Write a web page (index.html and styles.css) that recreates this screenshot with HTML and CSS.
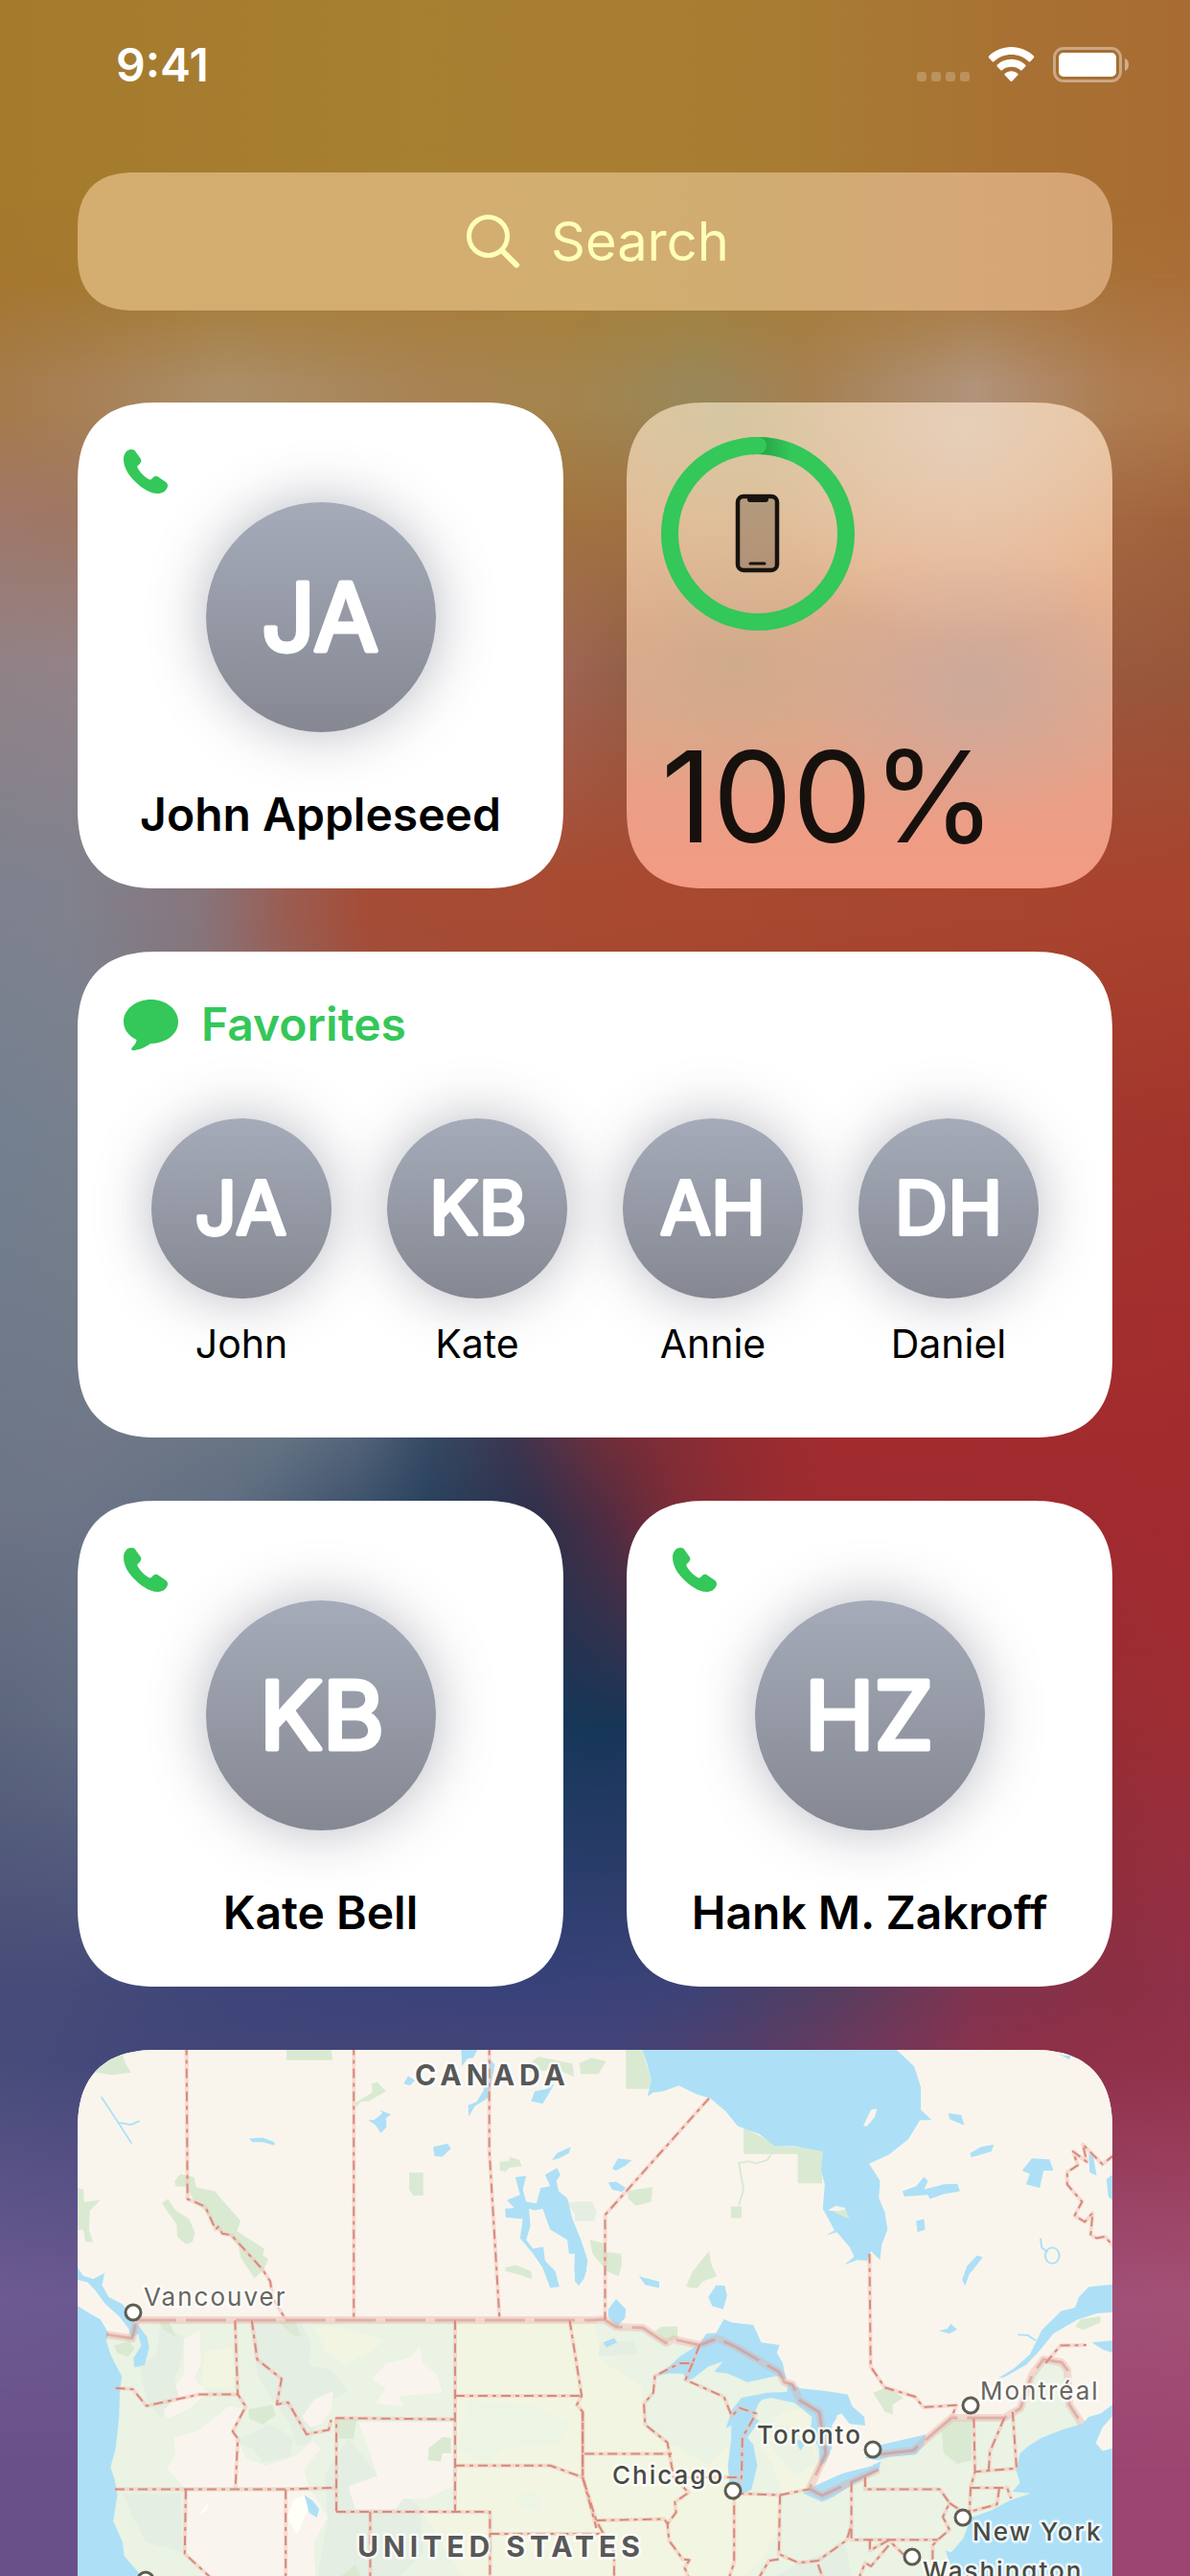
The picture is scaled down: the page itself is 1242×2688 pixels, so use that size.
FILE: index.html
```html
<!DOCTYPE html>
<html lang="en">
<head>
<meta charset="utf-8">
<meta name="viewport" content="width=device-width, initial-scale=1">
<title>Today View</title>
<link rel="stylesheet" href="styles.css">
</head>
<body>
<div class="wallpaper" aria-hidden="true">
  <i class="band b0"></i><i class="band b1"></i><i class="band b2"></i><i class="band b3"></i><i class="band b4"></i><i class="band b5"></i><i class="band b6"></i><i class="band b7"></i><i class="band b8"></i><i class="band b9"></i><i class="band b10"></i><i class="band b11"></i><i class="band b12"></i><i class="band b13"></i>
</div>

<svg class="sprite" aria-hidden="true">
  <symbol id="phone" viewBox="0 0 46 46">
    <path d="M8 0C11 0 12 1 13 3L18 10C19 12 18 14 16 16C14 17.500 14 18 15 20C18 25 22 28.500 26 31C28 32 28.500 31.500 30 30C32 28 34 27 36 28.500L44 34C46 35.500 46.500 37.500 45.500 40C43.500 44.500 39.500 46 35 46C27 46 17 39 10 31.500C4 25 0 18 0 10C0 5 3 0 8 0Z"/>
  </symbol>
  <symbol id="bubble" viewBox="0 0 57 53">
    <path d="M28.500 0C44 0 57 10 57 23C57 36 45 45.500 28 46C21 51 14 53 10 53C8 53 7.500 51.500 9 50C12 47 13.500 44 13.500 42C5 38 0 31 0 23C0 10 13 0 28.500 0Z"/>
  </symbol>
</svg>

<div class="screen">
  <header class="status">
    <time class="clock">9:41</time>
    <svg class="status-icons" viewBox="0 0 222 40" aria-label="Wi-Fi on, battery full">
      <g fill="#fff" fill-opacity=".22"><rect y="27" width="10" height="10" rx="3"/><rect x="15" y="27" width="10" height="10" rx="3"/><rect x="30" y="27" width="10" height="10" rx="3"/><rect x="45" y="27" width="10" height="10" rx="3"/></g>
      <g fill="#fff">
        <path d="M98.500 1C107.500 1 115.500 4.500 121.500 10C122.500 11 122.500 11.500 122 12.300L118.500 16C117.800 16.700 117.200 16.700 116.500 16C111.500 11.500 105.500 9 98.500 9S85.500 11.500 80.500 16C79.800 16.700 79.200 16.700 78.500 16L75 12.300C74.500 11.500 74.500 11 75.500 10C81.500 4.500 89.500 1 98.500 1Z"/>
        <path d="M98.500 13.800C104.200 13.800 109.200 16 113 19.500C113.800 20.200 113.800 20.800 113.200 21.500L109.800 25C109 25.800 108.500 25.700 107.800 25C105.200 22.800 102 21.700 98.500 21.700S91.800 22.800 89.200 25C88.500 25.700 88 25.800 87.200 25L83.800 21.500C83.200 20.800 83.200 20.200 84 19.500C87.800 16 92.800 13.800 98.500 13.800Z"/>
        <path d="M98.500 26.300C101.300 26.300 103.500 27.300 105.200 28.700C105.800 29.300 105.800 29.800 105.200 30.400L99.500 36.500C98.800 37.200 98.200 37.200 97.500 36.500L91.800 30.400C91.200 29.800 91.200 29.300 91.800 28.700C93.500 27.300 95.700 26.300 98.500 26.300Z"/>
        <rect x="148" y="7" width="60" height="25" rx="5"/>
      </g>
      <rect x="143.500" y="2.500" width="69" height="34" rx="9.500" fill="none" stroke="#fff" stroke-opacity=".4" stroke-width="3"/>
      <path d="M217 13C220 14 221 17 221 19.500S220 25 217 26Z" fill="#fff" fill-opacity=".45"/>
    </svg>
  </header>

  <label class="search">
    <svg class="search-icon" viewBox="0 0 56 56" aria-hidden="true"><circle cx="22.500" cy="22.500" r="20" fill="none" stroke="currentColor" stroke-width="5"/><path d="M37.500 38L52 52.500" stroke="currentColor" stroke-width="6" stroke-linecap="round"/></svg>
    <input class="search-input" type="search" placeholder="Search" aria-label="Search">
  </label>

  <main class="widgets">
    <a class="card contact" href="#john-appleseed">
      <svg class="phone" aria-hidden="true"><use href="#phone"/></svg>
      <svg class="avatar" viewBox="0 0 240 240"><text class="initials" x="119" y="155">JA</text></svg>
      <span class="name">John Appleseed</span>
    </a>

    <section class="card battery" aria-label="Battery">
      <svg class="ring" viewBox="0 0 202 202" aria-hidden="true">
        <defs><linearGradient id="cap"><stop offset="0" stop-color="#25a244"/><stop offset="1" stop-color="#34c759"/></linearGradient></defs>
        <circle cx="101" cy="101" r="92" fill="none" stroke="#34c759" stroke-width="18"/>
        <path d="M101 9A92 92 0 0 1 136 16" fill="none" stroke="url(#cap)" stroke-width="18"/>
        <path d="M94 9.300L101 9" fill="none" stroke="#34c759" stroke-width="18" stroke-linecap="round"/>
        <rect x="80" y="62" width="41" height="77" rx="6" fill="#1c130e" fill-opacity=".22" stroke="#17130e" stroke-width="4.500"/>
        <path d="M90 61H112V65C112 67 111 68 109 68H93C91 68 90 67 90 65Z" fill="#17130e"/>
        <path d="M93 132H108" stroke="#17130e" stroke-width="3" stroke-linecap="round"/>
      </svg>
      <span class="percent">100%</span>
    </section>

    <section class="card favorites">
      <h2 class="favorites-title"><svg class="bubble" aria-hidden="true"><use href="#bubble"/></svg>Favorites</h2>
      <ul class="people">
        <li><a class="person" href="#john"><svg class="avatar" viewBox="0 0 240 240"><text class="initials" x="119" y="155">JA</text></svg>John</a></li>
        <li><a class="person" href="#kate"><svg class="avatar" viewBox="0 0 240 240"><text class="initials" x="121" y="155">KB</text></svg>Kate</a></li>
        <li><a class="person" href="#annie"><svg class="avatar" viewBox="0 0 240 240"><text class="initials" x="120" y="155">AH</text></svg>Annie</a></li>
        <li><a class="person" href="#daniel"><svg class="avatar" viewBox="0 0 240 240"><text class="initials" x="120" y="155">DH</text></svg>Daniel</a></li>
      </ul>
    </section>

    <a class="card contact" href="#kate-bell">
      <svg class="phone" aria-hidden="true"><use href="#phone"/></svg>
      <svg class="avatar" viewBox="0 0 240 240"><text class="initials" x="121" y="155">KB</text></svg>
      <span class="name">Kate Bell</span>
    </a>
    <a class="card contact" href="#hank-zakroff">
      <svg class="phone" aria-hidden="true"><use href="#phone"/></svg>
      <svg class="avatar" viewBox="0 0 240 240"><text class="initials" x="119" y="155">HZ</text></svg>
      <span class="name">Hank M. Zakroff</span>
    </a>
  </main>

  <section class="map" aria-label="Map of North America">
    <svg class="map-art" viewBox="0 0 1080 549" preserveAspectRatio="xMidYMin slice">
      <defs>
        <g id="states-west" class="states" transform="translate(-21 -19) scale(.3571 .3622)">
          <path d="M377 40L380 482 432 504 462 570 470 562 482 582 508 586 600 686 622 720 628 765 666 828"/>
          <path d="M866 40V828M1262 40V340L1292 828"/>
          <path d="M519 832L527 1045 550 1080 512 1152 527 1172 520 1316"/>
          <path d="M568 832L584 945 655 1000 641 1074 674 1068 728 1160 793 1147 800 1118"/>
          <path d="M170 1027L220 1030 260 1078 415 1045H527"/>
          <path d="M168 1318H667L815 1314"/>
          <path d="M815 1382V1113L1162 1117M815 1383H1264V1600M1162 832V1383"/>
          <path d="M1162 1049H1532M1162 1250H1440L1535 1284M1264 1447H1600"/>
          <path d="M1497 832L1532 1049 1518 1075 1535 1095V1284L1575 1430"/>
          <path d="M375 1320L372 1504 450 1575M667 1320V1600M914 1384V1600"/>
        </g>
        <g id="states-east" class="states" transform="translate(519 -19) scale(.4094 .3622)">
          <path d="M342 192L77 528V830"/>
          <path d="M751 640L754 965 790 1025 868 1052 888 1082 973 1076 960 1112"/>
          <path d="M20 1095V1284L55 1410 100 1500V1600"/>
          <path d="M25 1216H247M55 1408L228 1404 236 1418 240 1466 275 1520 292 1522 280 1545 300 1600"/>
          <path d="M318 902L300 955 268 955 204 992 200 1040 176 1072 179 1132 236 1184 252 1284H425"/>
          <path d="M300 955L282 1003 380 1052 400 1108 420 1084 462 1100 427 1170 425 1284 406 1330V1530L385 1600"/>
          <path d="M252 1284L290 1328 255 1355 258 1385 236 1418"/>
          <path d="M406 1330L523 1335 598 1318M523 1335L520 1505 570 1530 620 1524 693 1465 705 1420M520 1520L495 1524 455 1600M620 1535L640 1600"/>
          <path d="M705 1300V1464H925M740 1284V1318H930L955 1358 938 1398 955 1435 925 1464 912 1480V1568"/>
          <path d="M955 1358L985 1380M1017 1114L1020 1268 1009 1312 1006 1385M1095 1112L1058 1210 1055 1265M1116 1095L1126 1258 1020 1268M1009 1314H1102L1112 1345M1082 1314L1076 1362 1010 1382"/>
          <path d="M752 1464V1495L800 1465 860 1530M800 1480L755 1540 740 1530 715 1600"/>
          <path d="M1200 955L1238 904 1304 903"/>
          <path d="M1375 355L1345 382 1295 325 1305 375 1270 345 1282 385 1255 405V440L1293 490 1274 530 1300 548 1320 522 1315 585 1330 595 1352 590 1375 622"/>
        </g>
        <g id="border-line">
          <path d="M61 282H538L549 281 562 289 590 290 614 306 622 302 649 308 668 301 687 310 732 336 738 347 746 349 754 366 774 378 781 421 764 458 777 465 836 438"/>
          <path d="M837 422L872 418 912 384H967L984 374 996 339 1008 323 1027 326 1033 334 1035 370 1048 390"/>
          <path d="M30 297L57 301 61 284"/>
        </g>
      </defs>
      <rect class="land" width="1080" height="549"/>

      <g transform="translate(-21 -19) scale(.3571 .3622)">
        <path class="us" d="M228 830H1640V1600H0V880H200Z"/>
        <g class="forest">
          <path d="M560 832H710L740 900 735 960 800 975 850 1035 800 1060 760 1110 740 1180 700 1195 680 1130 620 1050 585 990Z"/>
          <path d="M300 850L370 880 360 960 340 1000 360 1050 300 1110 260 1060 240 960 290 930Z"/>
          <path d="M520 1180L620 1130 690 1170 680 1225 600 1240 570 1200Z"/>
          <path d="M780 1280L850 1170 930 1270 960 1300 1060 1370 1070 1500 1000 1568H760L790 1400Z"/>
          <path d="M1170 920L1220 900 1200 1010 1170 1020ZM1170 1150L1240 1190 1200 1260 1168 1240Z"/>
          <path d="M190 1330H360L365 1500 260 1470 220 1400Z"/>
          <path d="M1485 490L1568 495V545L1520 535Z"/>
        </g>
        <g class="plain">
          <path d="M1168 835H1600V1600H1270V1385H1168ZM750 850L830 850 960 890 900 930 840 960 790 930ZM430 920L510 910 515 1030 420 1025Z"/>
          <path d="M1070 1390H1260V1568H1180L1120 1470Z"/>
        </g>
        <g class="pale">
          <path d="M1200 1060L1400 1080 1500 1130 1460 1190 1300 1200 1250 1250 1170 1200ZM1340 1340L1400 1320 1410 1370 1360 1375Z"/>
        </g>
        <g class="dry">
          <path d="M370 885L415 860 420 950 400 1000 440 1040 380 1090 320 1115 310 1090 355 1050 345 1020 370 985Z"/>
          <path d="M340 1170L410 1150 500 1080 545 1085 515 1150 550 1230 610 1250 700 1220 745 1180 770 1200 720 1260 735 1312H370L320 1260 345 1220Z"/>
          <path d="M920 1000L960 955 1030 940 1060 905 1065 950 1110 990 1125 1040 1000 1050 1010 1080 930 1070 960 1030Z"/>
          <path d="M880 1125L1155 1125V1310L1080 1345 1010 1345 990 1375 870 1375 850 1310 935 1280 900 1180Z"/>
          <path d="M380 1325H745L790 1400 750 1470 755 1600H450L377 1500Z"/>
          <path d="M715 1110L750 1060 805 1035 800 1090 770 1130 740 1140Z"/>
        </g>
        <path fill="#fffffa" d="M672 1400L690 1350 725 1335 735 1370 700 1448ZM415 1390L445 1355 435 1380Z"/>
        <g class="park">
          <path d="M100 115L140 70 190 65 198 90 215 118 160 125ZM669 50H800L804 82H669ZM870 205L920 175 918 150 935 145 960 172 910 200 885 202 875 217Z"/>
          <path d="M59 450L76 455 78 490 125 485 95 515 92 570 104 606H82L75 570 59 572Z"/>
          <path d="M342 430L360 410 400 420 405 448 460 460 535 545 525 575 605 625 600 645 617 655 600 690 575 710 535 650 530 620 500 585 465 570 430 515 405 495 375 448 345 445Z"/>
          <path d="M305 495L322 482 345 515 385 540 402 580 395 605 375 612 350 590 348 555Z"/>
          <path d="M1028 406H1069V472H1040L1028 455ZM1292 375L1320 372 1322 360 1350 370 1357 388 1320 392 1310 403 1293 400ZM1308 680L1340 672 1385 690 1387 714 1350 700 1310 690Z"/>
          <path d="M1375 95L1405 72 1505 92 1510 130 1460 110 1380 115ZM1525 90L1568 75V118L1530 115Z"/>
          <path d="M165 905L210 890 225 915 205 937 175 925ZM295 835H325L348 880 310 860ZM640 832L695 835 712 878 690 875Z"/>
          <path d="M558 1088L630 1075 637 1105 600 1132 560 1115ZM820 1115L875 1117 865 1173H820ZM1085 1200L1125 1168 1150 1170 1150 1215 1125 1215 1120 1238 1083 1235ZM830 1568L870 1535 885 1568Z"/>
        </g>
        <g class="water">
          <path d="M59 790L100 815 125 828 150 870 142 888 155 930 178 975 188 992 182 1040 180 1110 170 1200 155 1255 167 1290 175 1335 163 1410 190 1470 195 1510 240 1562 280 1600H0V790Z"/>
          <path d="M59 680L75 703 105 712 138 695 130 730 150 765 190 785 228 835 262 880 268 910 255 960 225 968 222 940 245 905 235 870 215 885 208 855 180 820 140 785 110 745 88 722 59 715Z"/>
          <path d="M560 308L600 305 634 318 635 328 600 318 570 318ZM908 255L925 255 950 235 942 226 975 238 960 250 962 275 945 292 930 270ZM1098 332L1140 322 1150 337 1125 360 1102 358Z"/>
          <path d="M1180 52H1228L1215 75 1198 78 1182 100ZM1262 75L1278 95 1260 190 1220 215 1202 245 1200 212 1225 202 1245 170ZM1012 150L1025 128 1045 140 1030 155ZM1384 200L1395 172 1430 165 1452 150 1435 180 1418 208Z"/>
          <path d="M1445 370L1460 350 1500 332 1495 350 1465 365ZM1412 450L1440 445 1425 412 1460 393 1470 412 1458 430 1465 460 1490 480 1505 540 1530 600 1550 660 1540 710 1522 732 1510 690 1512 640 1495 640 1490 600 1440 570 1418 510 1395 515 1378 510 1382 560 1370 600 1390 625 1420 620 1425 660 1455 690 1467 735 1440 738 1418 680 1390 640 1352 595 1360 540 1310 535 1308 510 1335 508 1313 485 1352 470 1338 420 1370 415 1360 455 1370 490 1400 495Z"/>
          <path d="M722 1335L745 1350 765 1375 758 1400 735 1385Z"/>
        </g>
        <path d="M128 188L175 258 217 322M178 262L215 268 240 257" class="river"/>
      </g>

      <g transform="translate(519 -19) scale(.4094 .3622)">
        <path class="us" d="M49 830H75L105 852H175L235 898 318 902 365 882 520 980 555 1015 575 1060 622 1090 640 1215 598 1318 630 1335 775 1265V1217L862 1208 960 1112H1095L1135 1085 1160 1000 1195 945 1240 952 1258 1000V1070L1293 1130 1293 1600H49Z"/>
        <path class="plain" d="M0 832H49L70 950 170 1020 180 1130 240 1190 330 1200 390 1180 400 1330 520 1340V1440L470 1530 400 1600H0ZM520 1100L590 1080 610 1180 620 1240 580 1330H530L500 1240 470 1190Z"/>
        <path class="us" d="M179 1010L280 1003 385 1052 398 1180 340 1250 240 1180 176 1120ZM500 1130L600 1150 615 1240 560 1280 505 1200Z"/>
        <path class="forest" d="M65 895L150 890 160 930 60 935ZM0 490L45 490 55 520 50 545 0 545ZM480 1590L570 1530 690 1480 710 1600Z"/>
        <g class="park">
          <path d="M130 52H172L195 140V165H130ZM12 95L40 75 80 85 60 122H15ZM430 275L500 318 510 330 600 335 635 345 630 437H568V353H430ZM398 503H425V537H398ZM135 458L198 448 195 490 155 502 135 480Z"/>
          <path d="M38 600L75 610 80 635 118 640 120 670 112 705 82 690 45 640ZM342 632L348 670 362 705 325 720 312 740 283 735 300 690ZM205 862L220 850H262V885L235 895ZM760 1040L795 1025 838 1055 810 1075V1103L790 1095ZM1275 850L1290 828 1340 820V838L1295 860ZM935 1150L960 1120H1012V1235L975 1245 940 1215Z"/>
        </g>
        <path d="M500 355L490 370 460 380 445 373 418 378 430 455 418 500" fill="none" stroke="#daead2" stroke-width="5"/>
        <g class="water">
          <path d="M172 52L185 95 195 140 185 187 200 175 225 172 265 155 310 180 345 192 385 230 415 272 470 295 510 330 560 330 632 345 628 400 637 440 632 510 662 572 640 587 668 578 700 620 712 648 686 672 720 658 745 660 755 632 778 658 782 615 797 570 790 520 775 480 778 430 750 380 800 355 850 310 880 255 910 255 882 225 882 160 865 100 820 52Z"/>
          <path d="M205 992L240 965 268 935 318 900 335 870 360 868 380 828 400 838 455 845 475 895 522 903 515 925 530 955 538 1000 515 992 440 1010 390 985 355 980 378 950 340 965 300 1000 285 1002 275 985 240 985Z"/>
          <path d="M545 1010L575 1028 640 1035 695 1045 708 1080 738 1110 740 1135 700 1130 672 1105 655 1135 655 1200 640 1240 625 1250 622 1200 600 1150 605 1110 560 1070 500 1055 478 1060 440 1100 430 1090 405 1130 385 1143 400 1090 425 1055 490 1040 540 1038Z"/>
          <path d="M400 1095L450 1050 470 1065 455 1110 470 1120 440 1170 455 1190 465 1250 450 1320 420 1335 395 1310 390 1250 398 1180Z"/>
          <path d="M582 1330L600 1315 640 1290 690 1270 745 1255 780 1238 775 1265 700 1310 660 1340 630 1355ZM738 1228L765 1195 800 1185 895 1160 890 1190 870 1218 800 1225 770 1235Z"/>
          <path d="M1370 728L1310 735 1285 765 1275 795 1240 805 1190 860 1160 930 1120 970 1080 998 1095 995 1150 960 1180 925 1220 870 1280 830 1330 812 1370 808Z"/>
          <path d="M1370 1075L1340 1100 1310 1110 1293 1130 1240 1148 1190 1170 1155 1195 1135 1215 1125 1265 1135 1300 1115 1325 1162 1330 1110 1350 1060 1380 1010 1400 990 1460 960 1500 945 1495 955 1530 975 1568 985 1600H1370Z"/>
          <path d="M835 460L870 445 890 418 900 430 890 455 940 440 975 438 982 460 940 468 905 482 900 470 840 475ZM952 235L985 240 993 270 955 252ZM1008 350L1035 332 1068 325 1062 345 1010 362ZM1140 400L1165 365 1210 368 1220 400 1195 400 1185 450 1150 440 1160 410ZM870 545L890 540 893 570 873 578ZM1040 650L1005 700 995 732 987 715 1000 675 1025 645ZM928 862L950 855 958 842 975 858 955 870Z"/>
          <path d="M340 765L360 730 382 732 388 760 378 800 350 790ZM163 705L215 720V738L180 730ZM95 395L110 365 145 370 130 385 105 400ZM85 435L105 432 130 450 120 462 95 455ZM85 800L105 770 130 800 128 825 108 850 85 820ZM0 590L20 640 30 690 10 730 0 720ZM72 895L100 883 108 895 80 910ZM1230 62L1245 68 1265 70 1260 80ZM1310 350L1322 360 1330 415 1312 405ZM1355 425L1370 412V485L1360 475ZM1318 895L1370 890V925L1345 915ZM560 1175L590 1180 575 1207Z"/>
        </g>
        <path class="river" d="M1187 595L1190 622 1205 635M1130 873L1155 875 1175 890"/>
        <ellipse cx="1217" cy="645" rx="18" ry="23" class="river"/>
        <path class="land" d="M735 272L755 225 770 222 765 245 745 272ZM645 515L665 502 690 508 685 520ZM1370 1108L1345 1140 1328 1185 1345 1208 1370 1200ZM668 1105L680 1100 700 1130 730 1140 735 1200 770 1195 740 1228 760 1250 690 1268 600 1315 640 1240 655 1200Z"/>
        <path class="park" d="M660 520L690 512 700 540Z"/>
      </g>

      <g class="intl-glow"><use href="#border-line"/></g>
      <g class="intl-core"><use href="#border-line"/></g>
      <g class="state-glow"><use href="#states-west"/><use href="#states-east"/></g>
      <g class="state-core"><use href="#states-west"/><use href="#states-east"/></g>

      <g class="pins">
        <circle cx="58" cy="274" r="8"/><circle cx="684" cy="460" r="8"/><circle cx="830" cy="417" r="8"/><circle cx="932" cy="371" r="8"/><circle cx="924" cy="488" r="8"/><circle cx="871" cy="529" r="8"/><circle cx="71" cy="553" r="8"/>
      </g>
      <g class="country"><text x="352" y="37">CANADA</text><text x="292" y="529">UNITED STATES</text></g>
      <g class="city"><text x="69" y="267">Vancouver</text><text x="942" y="365">Montréal</text></g>
      <g class="city major"><text x="709" y="411">Toronto</text><text x="558" y="453">Chicago</text><text x="934" y="512">New York</text><text x="882" y="553">Washington</text></g>
    </svg>
  </section>
</div>
</body>
</html>
```
FILE: styles.css
```css
* { box-sizing: border-box; }

body {
  margin: 0;
  position: relative;
  min-height: 100vh;
  font-family: Inter, "Liberation Sans", sans-serif;
  color: #000;
  background: #6a4e86;
}

a { color: inherit; text-decoration: none; }
.sprite { position: absolute; width: 0; height: 0; }

/* Wallpaper: horizontal colour bands, each fading in over the one above */
.wallpaper { position: absolute; inset: 0; overflow: hidden; z-index: -1; }
.band {
  position: absolute;
  inset: 0;
  top: var(--y);
  mask-image: linear-gradient(transparent, #000 var(--fade));
}
.b0 { top: 0; mask-image: none; background: linear-gradient(90deg, #a47a2d, #a88032 35%, #a87d33 65%, #a87133 85%, #a86c32); }
.b1 { --y: 210px; --fade: 90px; background: linear-gradient(90deg, #a4772f, #a77d36 35%, #a68038 58%, #a97a3a 75%, #a96f38); }
.b2 { --y: 290px; --fade: 110px; background: linear-gradient(90deg, #a67b4b, #a78055 7%, #ab8e68 19%, #a88353 36%, #a4844c 48%, #98875a 59%, #a58050 68%, #b0937a 82%, #ae7c50 94%, #b0784a); }
.b3 { --y: 430px; --fade: 110px; background: linear-gradient(90deg, #a0786a, #9f7660 10%, #a27440 45%, #a17340 52%, #a56a44 90%, #a0633c); }
.b4 { --y: 540px; --fade: 160px; background: linear-gradient(90deg, #908287, #94838a 10%, #a4675a 45%, #925f48 53%, #9a5a40 90%, #98573a); }
.b5 { --y: 700px; --fade: 220px; background: linear-gradient(90deg, #7e828e, #80828e 6%, #87757c 17%, #9a5d52 24%, #a54c36 31%, #a84a30 50%, #a8432e); }
.b6 { --y: 960px; --fade: 220px; background: linear-gradient(90deg, #73808f, #78808e 8%, #a04938 40%, #a2382e 80%, #a3352d); }
.b7 { --y: 1180px; --fade: 320px; background: linear-gradient(90deg, #6e7788, #707888 8%, #667484 23%, #54647a 30%, #364a64 36%, #3c3650 43%, #702e3a 51%, #922c32 61%, #a22c2f 70%, #a22b2e); }
.b8 { --y: 1500px; --fade: 90px; background: linear-gradient(90deg, #6c7486, #6c7587 6%, #606e82 19%, #40546e 28%, #26405c 36%, #2c304c 45%, #502c42 51%, #7e2c36 57%, #9c2c2f 67%, #a12b2f); }
.b9 { --y: 1590px; --fade: 210px; background: linear-gradient(90deg, #5c667c, #606a80 6%, #163858 46%, #173658 52%, #902d36 80%, #9d2d33); }
.b10 { --y: 1800px; --fade: 270px; background: linear-gradient(90deg, #464c78, #464b78 6%, #3d4579 20%, #38427a 45%, #3c4276 58%, #543e60 70%, #803450 82%, #8b3044 94%, #90304a); }
.b11 { --y: 2073px; --fade: 80px; background: linear-gradient(90deg, #464c7a, #43477a 12%, #444577 35%, #46447a 52%, #563e68 63%, #7c3658 76%, #8e3048 85%, #92314a); }
.b12 { --y: 2150px; --fade: 250px; background: linear-gradient(90deg, #6d5a92, #6a5890 12%, #80507f 50%, #a0507a 90%, #a35176); }
.b13 { --y: 2400px; --fade: 180px; background: linear-gradient(90deg, #6a5088, #6a5088 10%, #9b4570 90%, #9b4570); }

.screen {
  display: flex;
  flex-direction: column;
  min-height: 100vh;
  padding: 0 81px;
}

/* Status bar */
.status {
  display: flex;
  align-items: flex-start;
  justify-content: space-between;
  height: 180px;
  margin: 0 -18px 0 40px;
  padding-top: 48px;
}
.clock { color: #fff; font-size: 48px; line-height: 40px; font-weight: 600; }
.status-icons { width: 222px; height: 40px; }

/* Search */
.search {
  display: flex;
  align-items: center;
  justify-content: center;
  gap: 32px;
  height: 144px;
  margin-bottom: 96px;
  padding-left: 24px;
  border-radius: 50px;
  color: #ffffba;
  background: linear-gradient(90deg, #d4ad70, #d2ae70 50%, #d0ac72 66%, #d6a878 85%, #d5a474);
}
.search-icon { width: 56px; height: 56px; }
.search-input {
  width: 204px;
  padding: 0;
  border: 0;
  outline: 0;
  appearance: none;
  background: none;
  color: inherit;
  font: 400 56px/72px Inter, "Liberation Sans", sans-serif;
}
.search-input::placeholder { color: inherit; opacity: 1; }
.search-input::-webkit-search-cancel-button { display: none; }

/* Widgets */
.widgets {
  display: grid;
  grid-template-columns: 1fr 1fr;
  gap: 66px;
  margin-bottom: 66px;
}
.card { min-height: 507px; border-radius: 70px; background: #fff; }

.contact {
  position: relative;
  display: flex;
  flex-direction: column;
  align-items: center;
  gap: 56px;
  padding-top: 104px;
}
.phone { position: absolute; left: 48px; top: 49px; width: 46px; height: 46px; fill: #34c759; }
.avatar {
  width: 240px;
  height: 240px;
  border-radius: 50%;
  background: linear-gradient(#a5abb9, #858892);
  box-shadow: 0 0 60px rgba(60, 64, 85, .36);
}
.initials {
  font-size: 98px;
  font-weight: 400;
  fill: #fff;
  stroke: #fff;
  stroke-width: 5px;
  stroke-linejoin: round;
  text-anchor: middle;
}
.name { font-size: 48px; line-height: 60px; font-weight: 600; }

.battery {
  display: flex;
  flex-direction: column;
  align-items: flex-start;
  justify-content: space-between;
  padding: 36px 36px 16px;
  background:
    radial-gradient(circle at 70% 5%, rgba(230, 208, 188, .9), transparent 38%),
    radial-gradient(circle at 20% 0%, rgba(208, 200, 165, .8), transparent 40%),
    radial-gradient(ellipse at 72% 58%, rgba(200, 168, 156, .9), transparent 36%),
    radial-gradient(ellipse at 22% 54%, rgba(202, 170, 138, .8), transparent 38%),
    linear-gradient(#eac49a, #e9b590 30%, #e2a98c 60%, #ea9f86 80%, #f39a84);
}
.ring { width: 202px; height: 202px; }
.percent { color: #17110e; font-size: 132px; line-height: 160px; }

.favorites { grid-column: 1 / -1; padding: 46px 77px 0; }
.favorites-title {
  display: flex;
  align-items: center;
  gap: 24px;
  margin: 0 -29px 68px;
  color: #34c759;
  font-size: 48px;
  line-height: 60px;
  font-weight: 600;
}
.bubble { width: 57px; height: 53px; fill: currentColor; }
.people { display: flex; justify-content: space-between; margin: 0; padding: 0; list-style: none; }
.person { display: flex; flex-direction: column; align-items: center; gap: 22px; font-size: 41px; line-height: 50px; }
.person .avatar { width: 188px; height: 188px; }

/* Map */
.map {
  position: relative;
  flex: 1 0 549px;
  overflow: hidden;
  border-radius: 70px 70px 0 0;
  background: #f9f5ed;
}
.map-art { position: absolute; inset: 0; width: 100%; height: 100%; }
.land { fill: #f9f5ed; }
.us { fill: #eaf3e4; }
.forest { fill: #e5eee2; }
.plain { fill: #f2f5e1; }
.pale { fill: #ecf5e3; }
.dry { fill: #f9f5ee; }
.park { fill: #daead2; }
.water { fill: #ade0f6; }
.river { fill: none; stroke: #ade0f6; stroke-width: 5px; }
.states path { vector-effect: non-scaling-stroke; }
.state-glow, .state-core, .intl-glow, .intl-core { fill: none; stroke-linejoin: round; }
.state-glow { stroke: #f6c0b4; stroke-opacity: .5; stroke-width: 4px; }
.state-core { stroke: #d58b7e; stroke-width: 2px; stroke-dasharray: 10 5 4 5; }
.intl-glow { stroke: #eaa79d; stroke-opacity: .35; stroke-width: 8px; }
.intl-core { stroke: #d08a82; stroke-opacity: .5; stroke-width: 3px; stroke-dasharray: 42 10; }
.pins { fill: #fff; stroke: #5d5d52; stroke-width: 3px; }
.country, .city { stroke: #fff; stroke-opacity: .8; stroke-width: 5px; stroke-linejoin: round; paint-order: stroke; }
.country { fill: #585858; font-size: 30px; font-weight: 700; letter-spacing: 5px; }
.city { fill: #66665e; font-size: 26px; letter-spacing: 2px; }
.major { fill: #4a4a42; font-weight: 500; }

/* Continuous corners where the browser can draw them */
@supports (corner-shape: squircle) {
  .card { border-radius: 84px; corner-shape: superellipse(1.3); }
  .map { border-radius: 84px 84px 0 0; corner-shape: superellipse(1.3); }
  .search { border-radius: 60px; corner-shape: superellipse(1.3); }
}
```
